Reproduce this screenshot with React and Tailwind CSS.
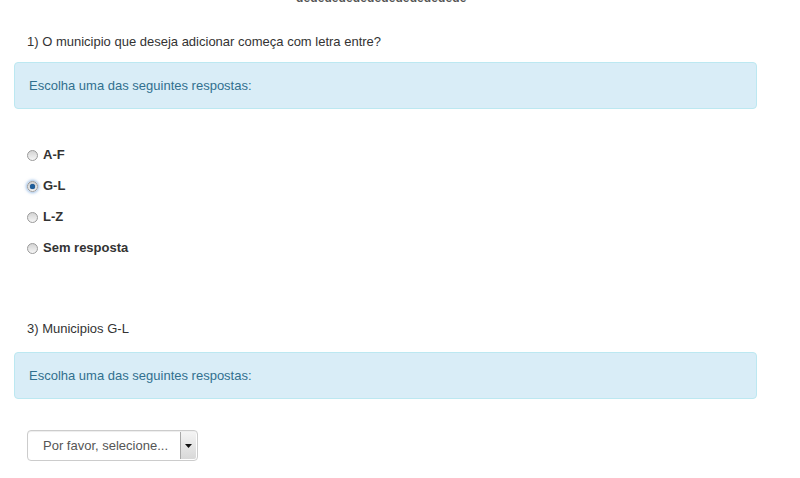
import React from "react";

function Radio({ checked }) {
  return (
    <span
      className={`relative inline-block w-[11px] h-[11px] rounded-full border border-[#9a9a9a] bg-gradient-to-b from-[#d4d4d4] to-[#f6f6f6] ${checked ? "shadow-[0_0_3px_1px_rgba(80,140,210,0.6)]" : ""}`}
    >
      {checked && (
        <span className="absolute left-[2px] top-[2px] w-[5px] h-[5px] rounded-full bg-[#1e5d9a] shadow-[0_0_1px_#0a3c70]" />
      )}
    </span>
  );
}

function Alert() {
  return (
    <div className="mx-[14px] mr-[43px] h-[47px] flex items-center pl-[14px] rounded-[4px] border border-[#bce8f1] bg-[#d9edf7] text-[#31708f] text-[13px]">
      Escolha uma das seguintes respostas:
    </div>
  );
}

export default function App() {
  const opts = [
    { label: "A-F" },
    { label: "G-L", checked: true },
    { label: "L-Z" },
    { label: "Sem resposta" },
  ];
  return (
    <div className="w-[800px] h-[478px] overflow-hidden bg-white text-[#333] text-[12px]" style={{ fontFamily: "'Liberation Sans', Arial, sans-serif" }}>
      <div className="h-[3px] overflow-hidden relative">
        <div className="absolute left-[296px] top-[-11px] text-[12px] font-bold tracking-[0.1px] text-[#555]">dededededededededededede</div>
      </div>
      <div className="pt-[29px] pl-[27px] h-[59px] text-[13px]">1) O municipio que deseja adicionar começa com letra entre?</div>
      <Alert />
      <div className="pl-[27px] pt-[38px] flex flex-col gap-[15px]">
        {opts.map((o) => (
          <div key={o.label} className="flex items-center gap-[5px] h-[16px]">
            <Radio checked={o.checked} />
            <span className="font-bold text-[#333] text-[13px]">{o.label}</span>
          </div>
        ))}
      </div>
      <div className="pl-[27px] pt-[59px] h-[96px] flex flex-col justify-end">
        <div className="h-[33px] text-[13px]">3) Municipios G-L</div>
      </div>
      <Alert />
      <div className="pl-[27px] pt-[31px]">
        <div className="w-[171px] h-[31px] flex rounded-[4px] border border-[#ccc] bg-white shadow-[inset_0_1px_1px_rgba(0,0,0,0.075)]">
          <div className="flex-1 flex items-center pl-[15px] text-[#555] text-[13px]">Por favor, selecione...</div>
          <div className="w-[16px] my-[1px] mr-[1px] border-l border-[#a8a8a8] bg-gradient-to-b from-[#f4f4f4] to-[#d8d8d8] flex items-center justify-center rounded-r-[2px]">
            <svg width="7" height="4" viewBox="0 0 7 4"><path d="M0 0h7L3.5 4z" fill="#111" /></svg>
          </div>
        </div>
      </div>
    </div>
  );
}
